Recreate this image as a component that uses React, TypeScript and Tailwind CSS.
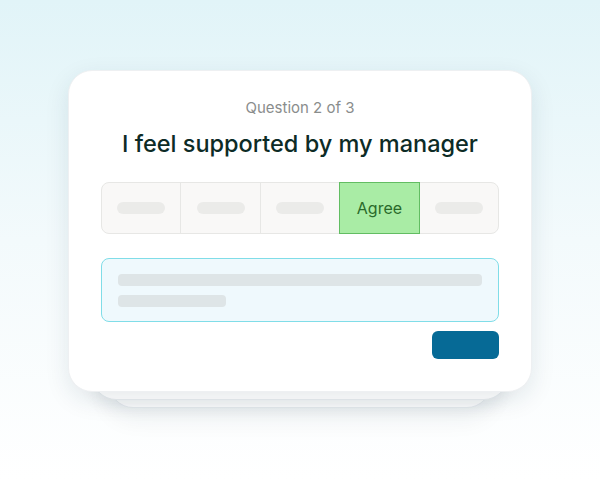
import React from 'react';

const Placeholder = () => <div className="h-3 w-12 rounded-full bg-[#ebebe9]" />;

export default function App() {
  const options = [0, 1, 2, 3, 4];
  return (
    <div
      className="w-[600px] h-[480px] bg-gradient-to-b from-[#e1f4f8] via-[#f3fafc] to-white flex justify-center pt-[70px]"
      style={{ fontFamily: 'Inter, "Noto Sans", sans-serif' }}
    >
      <div className="relative w-[464px] h-[322px]">
        {/* stacked cards behind */}
        <div className="absolute left-[41px] right-[41px] top-[16px] -bottom-[16px] rounded-[24px] bg-white border border-[#e9edf1] shadow-[0_10px_24px_rgba(15,40,60,0.07)]" />
        <div className="absolute left-[24px] right-[24px] top-[8px] -bottom-[8px] rounded-[24px] bg-white border border-[#e8ecf0] shadow-[0_6px_16px_rgba(15,40,60,0.07)]" />

        <div className="relative h-full rounded-[24px] bg-white border border-[#eef0f2] shadow-[0_8px_24px_rgba(20,50,70,0.10)] px-8 pt-[27px] flex flex-col items-center">
          <div className="text-[15px] leading-5 text-[#8a8d8c]">Question 2 of 3</div>
          <div className="mt-3 text-[23.5px] leading-7 font-medium text-[#0d2b26]">
            I feel supported by my manager
          </div>

          <div className="mt-6 w-full h-[52px] flex rounded-lg border border-[#e7e7e5] bg-[#f9f8f7]">
            {options.map((i) =>
              i === 3 ? (
                <div
                  key={i}
                  className="flex-1 -my-px flex items-center justify-center bg-[#a9eca5] border border-[#62bd62] text-[16px] text-[#2a6a2b]"
                >
                  Agree
                </div>
              ) : (
                <div
                  key={i}
                  className={`flex-1 flex items-center justify-center ${i < 2 ? 'border-r border-[#e7e7e5]' : ''}`}
                >
                  <Placeholder />
                </div>
              )
            )}
          </div>

          <div className="mt-6 w-full h-16 rounded-lg border border-[#80dde8] bg-[#eff9fd] px-4 pt-[15px] flex flex-col gap-[9px]">
            <div className="h-3 w-full rounded-sm bg-[#dee5e7]" />
            <div className="h-3 w-[108px] rounded-sm bg-[#dee5e7]" />
          </div>

          <div className="mt-[9px] w-full flex justify-end">
            <div className="w-[67px] h-7 rounded-md bg-[#066a96]" />
          </div>
        </div>
      </div>
    </div>
  );
}
